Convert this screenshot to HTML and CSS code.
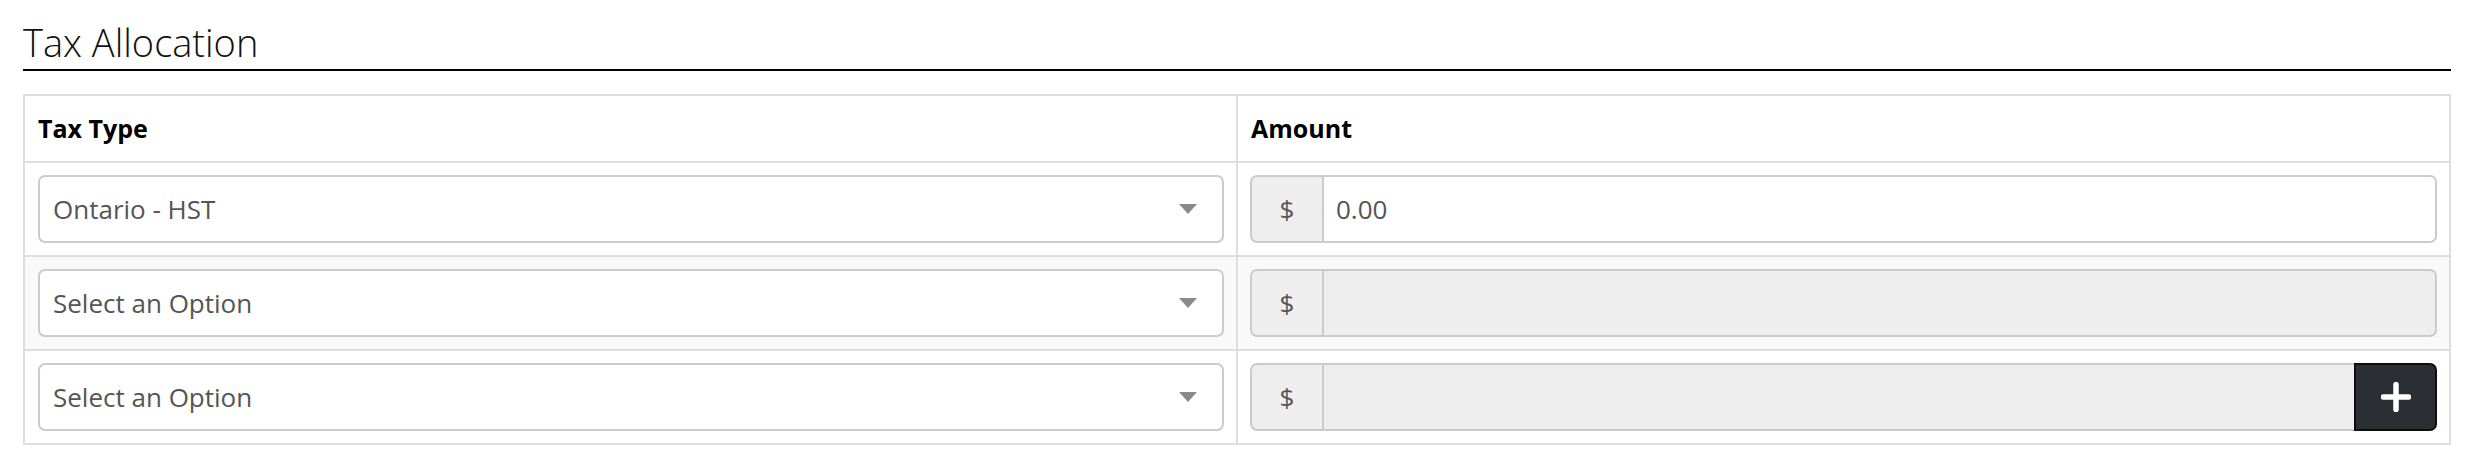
FILE: index.html
```html
<!DOCTYPE html>
<html lang="en">
<head>
<meta charset="utf-8">
<title>Tax Allocation</title>
<link rel="stylesheet" href="styles.css">
</head>
<body>
<section class="section">
  <h2 class="section-title">Tax Allocation</h2>
  <table class="alloc">
    <thead>
      <tr><th>Tax Type</th><th>Amount</th></tr>
    </thead>
    <tbody>
      <tr>
        <td><div class="select"><span class="select-text">Ontario - HST</span><span class="caret"></span></div></td>
        <td><div class="group"><span class="addon">$</span><span class="input">0.00</span></div></td>
      </tr>
      <tr class="striped">
        <td><div class="select"><span class="select-text">Select an Option</span><span class="caret"></span></div></td>
        <td><div class="group"><span class="addon">$</span><span class="input disabled"></span></div></td>
      </tr>
      <tr>
        <td><div class="select"><span class="select-text">Select an Option</span><span class="caret"></span></div></td>
        <td><div class="group"><span class="addon">$</span><span class="input disabled with-btn"></span><button class="btn-add" type="button" aria-label="Add"><svg width="30" height="30" viewBox="0 0 30 30"><path d="M15 2.5V27.5M2.5 15H27.5" stroke="#fff" stroke-width="5.5" stroke-linecap="round" fill="none"/></svg></button></div></td>
      </tr>
    </tbody>
  </table>
</section>
</body>
</html>
```
FILE: styles.css
```css
html, body {
  margin: 0;
  padding: 0;
  background: #ffffff;
}

body {
  font-family: "Open Sans", "Noto Sans", "Liberation Sans", sans-serif;
  color: #555555;
}

.section {
  margin: 0 27px 0 23px;
  padding-top: 17px;
}

.section-title {
  margin: 0 0 23px 0;
  font-size: 38px;
  font-weight: 300;
  line-height: 50px;
  color: #111111;
  padding-bottom: 2px;
  border-bottom: 2px solid #000000;
}

.alloc {
  width: 100%;
  border-collapse: collapse;
  table-layout: fixed;
  border: 2px solid #dedede;
}

.alloc th,
.alloc td {
  width: 50%;
  border: 2px solid #dedede;
  padding: 12px;
  text-align: left;
  vertical-align: middle;
}

.alloc th {
  font-size: 25px;
  font-weight: 700;
  line-height: 41px;
  color: #000000;
  padding-left: 13px;
}

.alloc td:first-child {
  padding-left: 13px;
}

.striped {
  background: #f9f9f9;
}

.select {
  box-sizing: border-box;
  height: 68px;
  display: flex;
  align-items: center;
  justify-content: space-between;
  padding: 0 25px 0 13px;
  background: #ffffff;
  border: 2px solid #cbcbcb;
  border-radius: 7px;
  font-size: 26px;
  color: #555555;
}

.caret {
  width: 0;
  height: 0;
  border-left: 9px solid transparent;
  border-right: 9px solid transparent;
  border-top: 10px solid #8a8a8a;
}

.group {
  display: flex;
  height: 68px;
  font-size: 26px;
}

.addon {
  box-sizing: border-box;
  width: 74px;
  display: flex;
  align-items: center;
  justify-content: center;
  background: #eeeeee;
  border: 2px solid #cbcbcb;
  border-radius: 7px 0 0 7px;
  color: #555555;
}

.input {
  box-sizing: border-box;
  flex: 1;
  display: flex;
  align-items: center;
  padding-left: 12px;
  background: #ffffff;
  border: 2px solid #cbcbcb;
  border-left: 0;
  border-radius: 0 7px 7px 0;
  color: #555555;
}

.input.disabled {
  background: #eeeeee;
}

.input.with-btn {
  border-right: 0;
  border-radius: 0;
}

.btn-add {
  box-sizing: border-box;
  width: 83px;
  height: 68px;
  margin: 0;
  padding: 0;
  display: flex;
  align-items: center;
  justify-content: center;
  background: #2b2f33;
  border: 2px solid #0e0e0e;
  border-radius: 0 7px 7px 0;
  cursor: pointer;
}
```
